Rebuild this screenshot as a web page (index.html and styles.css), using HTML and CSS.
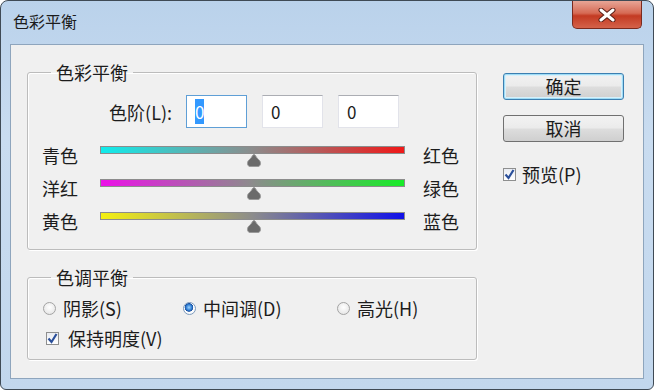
FILE: index.html
```html
<!DOCTYPE html>
<html lang="zh-CN">
<head>
    <meta charset="UTF-8">
    <title>色彩平衡</title>
    <link rel="stylesheet" href="styles.css">
</head>
<body>

    <div class="window">
        <div class="titlebar">
            <span class="title">色彩平衡</span>
            <div class="close">
                <svg width="18" height="14" viewBox="0 0 18 14">
                    <path d="M3 2 L15 12 M15 2 L3 12" stroke="#5a1e16" stroke-width="5" stroke-linecap="round"/>
                    <path d="M3 2 L15 12 M15 2 L3 12" stroke="#ffffff" stroke-width="3" stroke-linecap="round"/>
                </svg>
            </div>
        </div>

        <div class="content">
            <div class="left">
                <fieldset class="group balance">
                    <legend>色彩平衡</legend>

                    <div class="levels">
                        <span class="levels-label">色阶(L):</span>
                        <div class="field focused"><span class="sel">0</span></div>
                        <div class="field">0</div>
                        <div class="field">0</div>
                    </div>

                    <div class="slider-row">
                        <span class="side">青色</span>
                        <div class="slider">
                            <div class="track cyan-red"></div>
                            <svg class="thumb" width="16" height="13" viewBox="0 0 16 13">
                                <path d="M8 0.5 C9.5 0.5 10 3.5 12.5 5.5 C15.5 7.5 15 12.5 12 12.5 L4 12.5 C1 12.5 0.5 7.5 3.5 5.5 C6 3.5 6.5 0.5 8 0.5 Z" fill="#6b6b6b" stroke="#9a9a9a"/>
                            </svg>
                        </div>
                        <span class="side">红色</span>
                    </div>
                    <div class="slider-row">
                        <span class="side">洋红</span>
                        <div class="slider">
                            <div class="track magenta-green"></div>
                            <svg class="thumb" width="16" height="13" viewBox="0 0 16 13">
                                <path d="M8 0.5 C9.5 0.5 10 3.5 12.5 5.5 C15.5 7.5 15 12.5 12 12.5 L4 12.5 C1 12.5 0.5 7.5 3.5 5.5 C6 3.5 6.5 0.5 8 0.5 Z" fill="#6b6b6b" stroke="#9a9a9a"/>
                            </svg>
                        </div>
                        <span class="side">绿色</span>
                    </div>
                    <div class="slider-row">
                        <span class="side">黄色</span>
                        <div class="slider">
                            <div class="track yellow-blue"></div>
                            <svg class="thumb" width="16" height="13" viewBox="0 0 16 13">
                                <path d="M8 0.5 C9.5 0.5 10 3.5 12.5 5.5 C15.5 7.5 15 12.5 12 12.5 L4 12.5 C1 12.5 0.5 7.5 3.5 5.5 C6 3.5 6.5 0.5 8 0.5 Z" fill="#6b6b6b" stroke="#9a9a9a"/>
                            </svg>
                        </div>
                        <span class="side">蓝色</span>
                    </div>
                </fieldset>

                <fieldset class="group tone">
                    <legend>色调平衡</legend>
                    <div class="radios">
                        <label class="option first"><span class="radio"></span>阴影(S)</label>
                        <label class="option second"><span class="radio on"></span>中间调(D)</label>
                        <label class="option"><span class="radio"></span>高光(H)</label>
                    </div>
                    <label class="option keep"><span class="check"><svg width="11" height="11" viewBox="0 0 11 11"><path d="M1.5 5.5 L4.5 9 L9.5 1" fill="none" stroke="#2a4f9a" stroke-width="2.2"/></svg></span>保持明度(V)</label>
                </fieldset>
            </div>

            <div class="right">
                <div class="button default">确定</div>
                <div class="button">取消</div>
                <label class="option preview"><span class="check"><svg width="11" height="11" viewBox="0 0 11 11"><path d="M1.5 5.5 L4.5 9 L9.5 1" fill="none" stroke="#2a4f9a" stroke-width="2.2"/></svg></span>预览(P)</label>
            </div>
        </div>
    </div>

</body>
</html>
```

FILE: styles.css
```css
body {
    margin: 0;
    background: #ffffff;
    font-family: "Noto Sans CJK SC", "Noto Sans", sans-serif;
    color: #1c1c1c;
}

/* window frame */
.window {
    width: 654px;
    height: 390px;
    box-sizing: border-box;
    border: 1px solid #3f4a55;
    border-radius: 8px 8px 6px 6px;
    background: linear-gradient(#bad2eb, #c9dcf0 35%, #c2d7ed);
    padding: 0 9px 10px;
    display: flex;
    flex-direction: column;
}
.titlebar {
    height: 43px;
    display: flex;
    justify-content: space-between;
    align-items: flex-start;
}
.title {
    margin: 10px 0 0 3px;
    font-size: 16px;
    line-height: 20px;
}
.close {
    width: 70px;
    height: 28px;
    margin-right: 2px;
    box-sizing: border-box;
    border: 1px solid #7a2a1e;
    border-top: none;
    border-radius: 0 0 5px 5px;
    background: linear-gradient(#e7a596, #d66a54 45%, #c33a22 55%, #d4624a);
    display: flex;
    align-items: center;
    justify-content: center;
}
.content {
    flex: 1;
    background: #f0f0f0;
    border: 1px solid #8ea5bd;
    display: flex;
}

/* group boxes */
.left {
    width: 450px;
    margin-left: 16px;
}
.group {
    margin: 17px 0 0;
    padding: 0;
    border: 1px solid #bcbcbc;
    border-radius: 3px;
    box-shadow: 1px 1px 0 #ffffff inset, 1px 1px 0 #ffffff;
}
.group legend {
    margin-left: 23px;
    padding: 0 5px;
    font-size: 18px;
    line-height: 20px;
}
.balance {
    padding-bottom: 4px;
}
.tone {
    padding-bottom: 9px;
}

/* levels row */
.levels {
    display: flex;
    align-items: center;
    gap: 15px;
    margin-top: 13px;
}
.levels-label {
    width: 144px;
    margin-right: -1px;
    text-align: right;
    font-size: 18px;
}
.field {
    width: 61px;
    height: 33px;
    box-sizing: border-box;
    background: #ffffff;
    border: 1px solid #e2e3ea;
    border-top-color: #abadb3;
    padding-left: 8px;
    font-size: 17px;
    line-height: 31px;
}
.field.focused {
    border-color: #5f9fd6;
}
.sel {
    background: #3399ff;
    color: #ffffff;
}

/* sliders */
.slider-row {
    display: flex;
    align-items: flex-start;
    height: 33px;
    padding-left: 14px;
}
.slider-row:first-of-type {
    margin-top: 18px;
}
.levels + .slider-row {
    margin-top: 18px;
}
.side {
    font-size: 18px;
    line-height: 20px;
    margin-top: -1px;
}
.slider {
    width: 305px;
    margin: 0 18px 0 22px;
    display: flex;
    flex-direction: column;
    align-items: center;
}
.track {
    width: 100%;
    height: 8px;
    box-sizing: border-box;
    border: 1px solid #8c8c8c;
}
.cyan-red {
    background: linear-gradient(to right, #10ecec, #8c8c8c 50%, #f01818);
}
.magenta-green {
    background: linear-gradient(to right, #ec10e8, #8c8c8c 50%, #18ec28);
}
.yellow-blue {
    background: linear-gradient(to right, #f4f010, #8c8c8c 50%, #1010e8);
}
.thumb {
    display: block;
    margin-left: 3px;
}

/* radios and checkboxes */
.option {
    display: flex;
    align-items: center;
    font-size: 18px;
    line-height: 24px;
}
.radios {
    display: flex;
    margin-top: 9px;
    padding-left: 15px;
}
.first {
    width: 140px;
}
.second {
    width: 154px;
}
.radio {
    width: 13px;
    height: 13px;
    box-sizing: border-box;
    border-radius: 50%;
    border: 1px solid #a3a3a3;
    background: radial-gradient(circle at 50% 40%, #ffffff, #e0e0e0);
    margin-right: 7px;
}
.radio.on {
    border-color: #7d9bbd;
    background: radial-gradient(circle at 45% 40%, #9fd4ff 0, #2b7ad0 3px, #1d4f9c 4px, #ffffff 4.6px, #e8eef5);
}
.keep {
    margin-top: 6px;
    padding-left: 18px;
}
.check {
    width: 13px;
    height: 13px;
    box-sizing: border-box;
    border: 1px solid #8e8f8f;
    background: linear-gradient(#e9ecf2, #ffffff);
    margin-right: 9px;
    display: flex;
    align-items: center;
    justify-content: center;
}

/* buttons */
.right {
    width: 121px;
    margin-left: 26px;
    display: flex;
    flex-direction: column;
}
.button {
    height: 27px;
    box-sizing: border-box;
    border: 1px solid #707070;
    border-radius: 3px;
    background: linear-gradient(#f2f2f2, #ebebeb 48%, #dddddd 52%, #cfcfcf);
    text-align: center;
    font-size: 18px;
    line-height: 25px;
    margin-top: 15px;
}
.button.default {
    margin-top: 28px;
    border-color: #3c7fb1;
    box-shadow: inset 0 0 0 1px #9fdcf5, inset 0 0 0 2px #d8f0fb;
}
.preview {
    margin-top: 20px;
}
.preview .check {
    margin-right: 6px;
}
```
